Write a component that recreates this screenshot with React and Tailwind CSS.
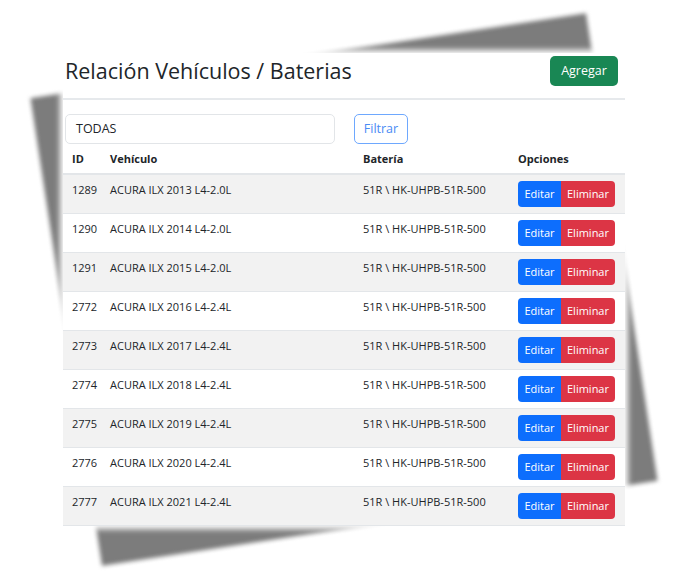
import React from 'react';

const rows = [
    { id: 1289, vehiculo: 'ACURA ILX 2013 L4-2.0L' },
    { id: 1290, vehiculo: 'ACURA ILX 2014 L4-2.0L' },
    { id: 1291, vehiculo: 'ACURA ILX 2015 L4-2.0L' },
    { id: 2772, vehiculo: 'ACURA ILX 2016 L4-2.4L' },
    { id: 2773, vehiculo: 'ACURA ILX 2017 L4-2.4L' },
    { id: 2774, vehiculo: 'ACURA ILX 2018 L4-2.4L' },
    { id: 2775, vehiculo: 'ACURA ILX 2019 L4-2.4L' },
    { id: 2776, vehiculo: 'ACURA ILX 2020 L4-2.4L' },
    { id: 2777, vehiculo: 'ACURA ILX 2021 L4-2.4L' },
];

const cols = 'grid grid-cols-[38px_253px_155px_116px]';

const Row = ({ row, striped }) => (
    <div className={`${cols} h-[39px] border-b border-[#e3e6e9] text-[11px] leading-[16px] ${striped ? 'bg-[#f2f2f2]' : 'bg-white'}`}>
        <div className="pl-[9px] pt-[7px]">{row.id}</div>
        <div className="pl-[9px] pt-[7px]">{row.vehiculo}</div>
        <div className="pl-[9px] pt-[7px]">51R \ HK-UHPB-51R-500</div>
        <div className="pl-[9px] pt-[6px]">
            <div className="flex h-[26px] text-white">
                <button className="w-[43px] rounded-l-[4px] bg-[#0d6efd]">Editar</button>
                <button className="w-[54px] rounded-r-[4px] bg-[#dc3545]">Eliminar</button>
            </div>
        </div>
    </div>
);

export default function App() {
    return (
        <div className="w-[689px] h-[579px] bg-white pl-[63px] pt-[53px] text-[#212529] font-['Open_Sans',sans-serif]">
            <div className="relative w-[562px]">
                {/* tilted drop shadow behind the card */}
                <div className="absolute inset-0 bg-[#7c7c7c] rotate-[-8.7deg] blur-[2px]" />

                <div className="relative bg-white shadow-[0_0_6px_3px_#fff]">
                    {/* Header */}
                    <div className="flex items-center justify-between h-[47px] pb-[9px] pl-[2px] pr-[7px] border-b-2 border-[#e6e9ec]">
                        <h1 className="text-[21.5px] font-medium">Relación Vehículos / Baterias</h1>
                        <button className="w-[68px] h-[30px] rounded-[5px] bg-[#198754] text-white text-[12.5px]">
                            Agregar
                        </button>
                    </div>

                    {/* Filter */}
                    <div className="flex items-center gap-[19px] mt-[14px] pl-[2px] text-[12.5px]">
                        <div className="w-[270px] h-[30px] flex items-center pl-[10px] border border-[#e2e5e8] rounded-[5px]">
                            TODAS
                        </div>
                        <button className="w-[54px] h-[30px] rounded-[5px] border border-[#6ea8fe] text-[#4a8bf5]">
                            Filtrar
                        </button>
                    </div>

                    {/* Table */}
                    <div className="mt-[2px]">
                        <div className={`${cols} items-center h-[29px] border-b-2 border-[#e3e6e9] text-[11px] font-bold`}>
                            <div className="pl-[9px]">ID</div>
                            <div className="pl-[9px]">Vehículo</div>
                            <div className="pl-[9px]">Batería</div>
                            <div className="pl-[9px]">Opciones</div>
                        </div>
                        {rows.map((row, i) => (
                            <Row key={row.id} row={row} striped={i % 2 === 0} />
                        ))}
                    </div>
                </div>
            </div>
        </div>
    );
}
